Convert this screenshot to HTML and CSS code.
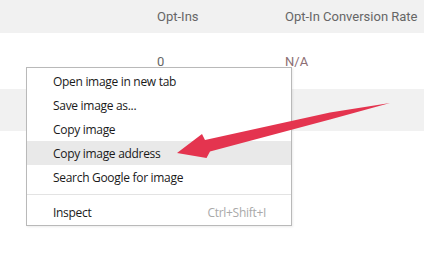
FILE: index.html
```html
<!DOCTYPE html>
<html>
<head>
<meta charset="utf-8">
<link rel="stylesheet" href="styles.css">
</head>
<body>
<div class="page">
  <div class="table">
    <div class="row head">
      <div class="cell c1">Opt-Ins</div>
      <div class="cell c2">Opt-In Conversion Rate</div>
    </div>
    <div class="row body">
      <div class="cell c1">0</div>
      <div class="cell c2 na">N/A</div>
    </div>
    <div class="row band"></div>
  </div>

  <div class="menu">
    <div class="item">Open image in new tab</div>
    <div class="item">Save image as...</div>
    <div class="item">Copy image</div>
    <div class="item active">Copy image address</div>
    <div class="item">Search Google for image</div>
    <div class="sep"></div>
    <div class="item"><span>Inspect</span><span class="key">Ctrl+Shift+I</span></div>
  </div>

  <svg class="arrow" width="424" height="274" viewBox="0 0 424 274">
    <path d="M177 153 L202 134 L205 140 L330 112.5 L390 103 L330 119.5 L210 151.5 L206.5 158 Z" fill="#e4344f"/>
  </svg>
</div>
</body>
</html>
```
FILE: styles.css
```css
html, body {
  margin: 0;
  padding: 0;
  background: #fff;
}
.page {
  position: relative;
  width: 424px;
  height: 274px;
  overflow: hidden;
}
.table {
  font-family: Roboto, "Liberation Sans", sans-serif;
  font-size: 13px;
  color: #666;
}
.row {
  display: flex;
  align-items: center;
  padding-left: 157px;
}
.head {
  height: 33px;
  background: #f1f1f1;
}
.body {
  height: 56px;
  padding-top: 1px;
  box-sizing: border-box;
}
.band {
  height: 42px;
  background: #f1f1f1;
}
.c1 {
  width: 128px;
}
.na {
  color: #8c6e73;
}
.menu {
  position: absolute;
  left: 26px;
  top: 67px;
  width: 266px;
  box-sizing: border-box;
  background: #fff;
  border: 1px solid #b9b9b9;
  padding: 1px 0;
  font-family: "Open Sans", "Noto Sans", sans-serif;
  font-size: 12px;
  letter-spacing: -0.3px;
  color: #1a1a1a;
  box-shadow: 1px 1px 2px rgba(0,0,0,0.08);
}
.item {
  height: 24px;
  display: flex;
  align-items: center;
  justify-content: space-between;
  padding: 0 25px 0 26px;
}
.item.active {
  background: #e9e9e9;
}
.key {
  color: #a9a9a9;
}
.sep {
  height: 1px;
  background: #e3e3e3;
  margin: 5px 0;
}
.arrow {
  position: absolute;
  left: 0;
  top: 0;
}
```
